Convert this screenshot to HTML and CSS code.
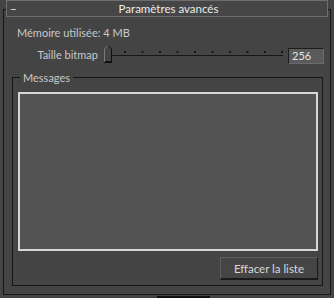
FILE: index.html
```html
<!DOCTYPE html>
<html>
    <head>
        <meta charset="UTF-8">
        <link rel="stylesheet" href="styles.css">
    </head>
    <body>
        <div class="rollout">
            <div class="rollout-title">
                <span class="toggle">–</span>
                <span>Paramètres avancés</span>
            </div>

            <div class="memory">Mémoire utilisée: 4 MB</div>

            <div class="bitmap-row">
                <label class="bitmap-label">Taille bitmap</label>
                <svg class="slider" width="180" height="20" viewBox="0 0 180 20">
                    <rect x="9" y="11" width="171" height="1" fill="#161616"/>
                    <g fill="#161616">
                        <rect x="21" y="7" width="2" height="2"/>
                        <rect x="38.5" y="7" width="2" height="2"/>
                        <rect x="56" y="7" width="2" height="2"/>
                        <rect x="73.5" y="7" width="2" height="2"/>
                        <rect x="91" y="7" width="2" height="2"/>
                        <rect x="108.5" y="7" width="2" height="2"/>
                        <rect x="126" y="7" width="2" height="2"/>
                        <rect x="143.5" y="7" width="2" height="2"/>
                        <rect x="161" y="7" width="2" height="2"/>
                        <rect x="178" y="7" width="2" height="2"/>
                    </g>
                    <polygon points="1.5,5 5,1.5 8.5,5 8.5,18.5 1.5,18.5" fill="#444"/>
                    <polyline points="1.5,18 1.5,5 5,1.5" fill="none" stroke="#7a7a7a" stroke-width="1"/>
                    <polyline points="5,1.5 8.5,5 8.5,18.5 1,18.5" fill="none" stroke="#101010" stroke-width="1"/>
                    <rect x="2" y="17" width="7" height="2" fill="#101010"/>
                </svg>
                <div class="spinner">256</div>
            </div>

            <fieldset class="messages">
                <legend>Messages</legend>
                <div class="message-list"></div>
                <div class="actions">
                    <button class="clear-btn">Effacer la liste</button>
                </div>
            </fieldset>
        </div>
        <div class="next-bar"></div>
    </body>
</html>
```

FILE: styles.css
```css
body {
    margin: 0;
    background-color: #444444;
    font-family: Lato, "Open Sans", sans-serif;
    font-size: 11px;
    color: #c8c8c8;
}

/* rollout frame */
.rollout {
    margin: 9px 3px 0 3px;
    border: 1px solid #161616;
    padding-bottom: 8px;
}

.rollout-title {
    display: flex;
    align-items: center;
    margin: -10px 2px 0 2px;
    height: 15px;
    border: 1px solid #6e6e6e;
    background-color: #464646;
    color: #ececec;
    font-size: 11.5px;
    line-height: 15px;
}

.rollout-title .toggle {
    width: 0;
    margin-left: 3px;
    white-space: nowrap;
}

.rollout-title span:last-child {
    flex: 1;
    text-align: center;
}

.memory {
    margin: 8px 0 0 13px;
    line-height: 15px;
}

.bitmap-row {
    display: flex;
    align-items: center;
    margin-top: 4px;
    height: 20px;
}

.bitmap-label {
    margin: 0 5px 0 33px;
    width: 61px;
    text-align: right;
    white-space: nowrap;
}

.slider {
    display: block;
}

.spinner {
    margin-left: 5px;
    width: 31px;
    height: 14px;
    border: 1px solid #1c1c1c;
    border-right-color: #6a6a6a;
    border-bottom-color: #6a6a6a;
    background-color: #5a5a5a;
    color: #e4e4e4;
    line-height: 14px;
    padding-left: 3px;
    margin-top: 4px;
}

/* group box */
.messages {
    margin: 7px 7px 0 8px;
    padding: 8px 4px 5px 5px;
    border: 1px solid #161616;
}

.messages legend {
    margin-left: 2px;
    padding: 0 3px;
    line-height: 13px;
}

.message-list {
    height: 155px;
    border: 2px solid #d6d6d6;
    background-color: #535353;
}

.actions {
    display: flex;
    justify-content: flex-end;
    margin-top: 6px;
}

.clear-btn {
    width: 98px;
    height: 23px;
    border: 1px solid #5c5c5c;
    border-right-color: #1a1a1a;
    border-bottom: 2px solid #1a1a1a;
    background-color: #454545;
    color: #d8d8d8;
    font-family: inherit;
    font-size: 11.5px;
    padding: 0;
}

.next-bar {
    margin: 1px 0 0 157px;
    width: 53px;
    height: 3px;
    background-color: #111;
}
```
